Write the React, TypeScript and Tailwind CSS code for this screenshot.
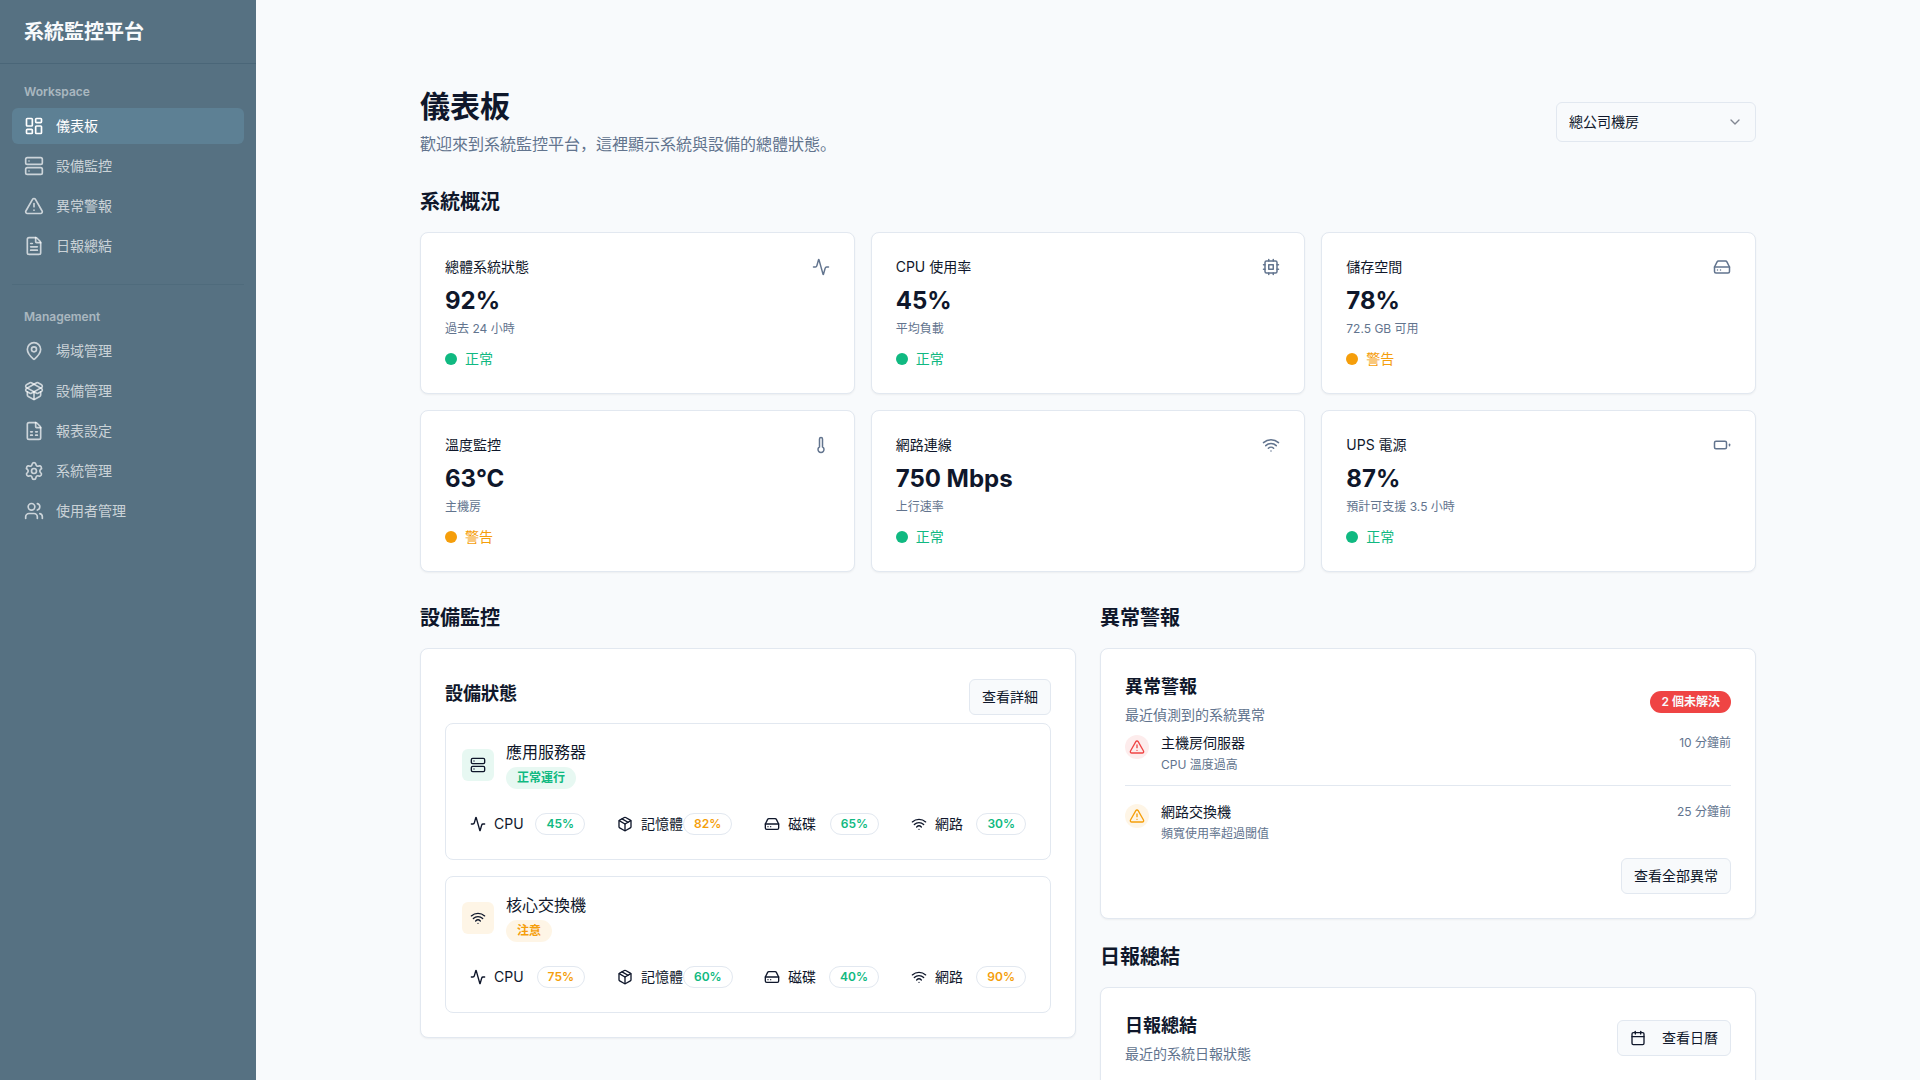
import React from 'react';
import {
  Activity,
  Calendar,
  ChevronDown,
  FileSpreadsheet,
  FileText,
  HardDrive,
  LayoutDashboard,
  MapPin,
  Package,
  PackageOpen,
  Server,
  Settings,
  Thermometer,
  TriangleAlert,
  Users,
  Wifi,
} from 'lucide-react';
import { clsx } from 'clsx';

type Icon = React.ComponentType<{ className?: string }>;
type Status = 'normal' | 'warning';

const STATUS_LABEL: Record<Status, string> = { normal: '正常', warning: '警告' };
const STATUS_TEXT: Record<Status, string> = { normal: 'text-[#10b981]', warning: 'text-[#f59e0b]' };
const STATUS_DOT: Record<Status, string> = { normal: 'bg-[#10b981]', warning: 'bg-[#f59e0b]' };
const STATUS_SOFT: Record<Status, string> = { normal: 'bg-[#10b981]/10', warning: 'bg-[#f59e0b]/10' };

function Cpu({ className }: { className?: string }) {
  return (
    <svg viewBox="0 0 24 24" fill="none" stroke="currentColor" strokeWidth="2" strokeLinecap="round" strokeLinejoin="round" className={className} aria-hidden="true">
      <rect x="4" y="4" width="16" height="16" rx="2" />
      <rect x="9" y="9" width="6" height="6" />
      <path d="M15 2v2M15 20v2M2 15h2M2 9h2M20 15h2M20 9h2M9 2v2M9 20v2" />
    </svg>
  );
}

function Battery({ className }: { className?: string }) {
  return (
    <svg viewBox="0 0 24 24" fill="none" stroke="currentColor" strokeWidth="2" strokeLinecap="round" strokeLinejoin="round" className={className} aria-hidden="true">
      <rect x="2" y="7" width="16" height="10" rx="2" />
      <path d="M22 11v2" />
    </svg>
  );
}

const workspaceLinks: { label: string; icon: Icon; active?: boolean }[] = [
  { label: '儀表板', icon: LayoutDashboard, active: true },
  { label: '設備監控', icon: Server },
  { label: '異常警報', icon: TriangleAlert },
  { label: '日報總結', icon: FileText },
];

const managementLinks: { label: string; icon: Icon; active?: boolean }[] = [
  { label: '場域管理', icon: MapPin },
  { label: '設備管理', icon: PackageOpen },
  { label: '報表設定', icon: FileSpreadsheet },
  { label: '系統管理', icon: Settings },
  { label: '使用者管理', icon: Users },
];

const stats: { title: string; value: string; hint: string; status: Status; icon: Icon }[] = [
  { title: '總體系統狀態', value: '92%', hint: '過去 24 小時', status: 'normal', icon: Activity },
  { title: 'CPU 使用率', value: '45%', hint: '平均負載', status: 'normal', icon: Cpu },
  { title: '儲存空間', value: '78%', hint: '72.5 GB 可用', status: 'warning', icon: HardDrive },
  { title: '溫度監控', value: '63°C', hint: '主機房', status: 'warning', icon: Thermometer },
  { title: '網路連線', value: '750 Mbps', hint: '上行速率', status: 'normal', icon: Wifi },
  { title: 'UPS 電源', value: '87%', hint: '預計可支援 3.5 小時', status: 'normal', icon: Battery },
];

const devices: {
  name: string;
  badge: string;
  status: Status;
  icon: Icon;
  usage: { label: string; value: number; status: Status; icon: Icon }[];
}[] = [
  {
    name: '應用服務器',
    badge: '正常運行',
    status: 'normal',
    icon: Server,
    usage: [
      { label: 'CPU', value: 45, status: 'normal', icon: Activity },
      { label: '記憶體', value: 82, status: 'warning', icon: Package },
      { label: '磁碟', value: 65, status: 'normal', icon: HardDrive },
      { label: '網路', value: 30, status: 'normal', icon: Wifi },
    ],
  },
  {
    name: '核心交換機',
    badge: '注意',
    status: 'warning',
    icon: Wifi,
    usage: [
      { label: 'CPU', value: 75, status: 'warning', icon: Activity },
      { label: '記憶體', value: 60, status: 'normal', icon: Package },
      { label: '磁碟', value: 40, status: 'normal', icon: HardDrive },
      { label: '網路', value: 90, status: 'warning', icon: Wifi },
    ],
  },
];

const alerts = [
  { title: '主機房伺服器', detail: 'CPU 溫度過高', time: '10 分鐘前', tone: 'bg-[#ef4444]/10 text-[#ef4444]' },
  { title: '網路交換機', detail: '頻寬使用率超過閾值', time: '25 分鐘前', tone: 'bg-[#f59e0b]/10 text-[#f59e0b]' },
];

function NavGroup({ title, links }: { title: string; links: typeof workspaceLinks }) {
  return (
    <div>
      <h2 className="px-3 py-2 text-xs font-semibold text-white/50">{title}</h2>
      <ul className="flex flex-col gap-1">
        {links.map(({ label, icon: LinkIcon, active }) => (
          <li key={label}>
            <a
              href="#"
              className={clsx(
                'flex h-9 items-center gap-3 rounded-md px-3 text-sm',
                active ? 'bg-[#5d8094] text-white' : 'text-white/70 hover:bg-[#5d8094] hover:text-white'
              )}
            >
              <LinkIcon className="size-5 shrink-0" />
              {label}
            </a>
          </li>
        ))}
      </ul>
    </div>
  );
}

function Sidebar() {
  return (
    <aside className="sticky top-0 h-screen w-64 shrink-0 bg-[#567182] text-white">
      <div className="flex h-16 items-center border-b border-[#4a6678] px-6">
        <span className="text-xl font-bold text-slate-50">系統監控平台</span>
      </div>
      <nav className="p-3">
        <NavGroup title="Workspace" links={workspaceLinks} />
        <hr className="mt-5 mb-4 border-[#4f6b7c]" />
        <NavGroup title="Management" links={managementLinks} />
      </nav>
    </aside>
  );
}

function Card({ className, children }: { className?: string; children: React.ReactNode }) {
  return (
    <div className={clsx('rounded-lg border border-slate-200 bg-white p-6 shadow-xs', className)}>
      {children}
    </div>
  );
}

function SectionTitle({ children }: { children: React.ReactNode }) {
  return <h2 className="mb-4 text-xl font-bold">{children}</h2>;
}

function OutlineButton({ className, children }: { className?: string; children: React.ReactNode }) {
  return (
    <button
      type="button"
      className={clsx(
        'inline-flex h-9 items-center justify-center rounded-md border border-slate-200 bg-slate-50 px-3 text-sm hover:bg-slate-100',
        className
      )}
    >
      {children}
    </button>
  );
}

function StatCard({ title, value, hint, status, icon: StatIcon }: (typeof stats)[number]) {
  return (
    <Card>
      <div className="flex items-center justify-between pb-2">
        <h3 className="text-sm">{title}</h3>
        <StatIcon className="size-[18px] text-slate-500" />
      </div>
      <p className="text-2xl font-bold">{value}</p>
      <p className="mt-1 text-xs text-slate-500">{hint}</p>
      <div className="mt-3 flex items-center gap-2">
        <span className={clsx('size-3 rounded-full', STATUS_DOT[status])} />
        <span className={clsx('text-sm', STATUS_TEXT[status])}>{STATUS_LABEL[status]}</span>
      </div>
    </Card>
  );
}

function DeviceCard({ name, badge, status, icon: DeviceIcon, usage }: (typeof devices)[number]) {
  return (
    <div className="rounded-lg border border-slate-200 p-4">
      <div className="mb-4 flex items-center gap-3">
        <div className={clsx('rounded-md p-2', STATUS_SOFT[status])}>
          <DeviceIcon className="size-4" />
        </div>
        <div className="flex flex-col items-start gap-[3px]">
          <h4 className="text-base">{name}</h4>
          <span
            className={clsx(
              'rounded-full border border-transparent px-2.5 py-0.5 text-xs font-bold',
              STATUS_SOFT[status],
              STATUS_TEXT[status]
            )}
          >
            {badge}
          </span>
        </div>
      </div>
      <div className="grid grid-cols-4 gap-4">
        {usage.map(({ label, value, status: level, icon: UsageIcon }) => (
          <div key={label} className="flex items-center justify-between p-2">
            <div className="flex items-center gap-2">
              <UsageIcon className="size-4 shrink-0" />
              <span className="text-sm whitespace-nowrap">{label}</span>
            </div>
            <span
              className={clsx(
                'rounded-full border border-slate-200 px-2.5 py-0.5 text-xs font-semibold',
                STATUS_TEXT[level]
              )}
            >
              {value}%
            </span>
          </div>
        ))}
      </div>
    </div>
  );
}

function DeviceSection() {
  return (
    <section>
      <SectionTitle>設備監控</SectionTitle>
      <Card>
        <div className="flex items-center justify-between pb-2">
          <h3 className="text-lg font-bold">設備狀態</h3>
          <OutlineButton className="mt-1.5">查看詳細</OutlineButton>
        </div>
        <div className="flex flex-col gap-4">
          {devices.map((device) => (
            <DeviceCard key={device.name} {...device} />
          ))}
        </div>
      </Card>
    </section>
  );
}

function AlertSection() {
  return (
    <section>
      <SectionTitle>異常警報</SectionTitle>
      <Card>
        <div className="flex items-center justify-between pb-2">
          <div>
            <h3 className="text-lg font-bold">異常警報</h3>
            <p className="mt-1 text-sm text-slate-500">最近偵測到的系統異常</p>
          </div>
          <span className="mt-1.5 rounded-full border border-transparent bg-[#ef4444] px-2.5 py-0.5 text-xs font-semibold text-slate-50">
            2 個未解決
          </span>
        </div>
        <ul className="flex flex-col gap-4">
          {alerts.map(({ title, detail, time, tone }) => (
            <li
              key={title}
              className="flex items-start gap-3 border-b border-slate-200 pb-3 last:border-b-0 last:pb-0"
            >
              <span className={clsx('mt-0.5 rounded-full p-1', tone)}>
                <TriangleAlert className="size-4" />
              </span>
              <div className="flex-1">
                <div className="flex items-center justify-between">
                  <p className="text-sm">{title}</p>
                  <span className="text-xs text-slate-500">{time}</span>
                </div>
                <p className="mt-1 text-xs text-slate-500">{detail}</p>
              </div>
            </li>
          ))}
        </ul>
        <div className="mt-4 flex justify-end">
          <OutlineButton>查看全部異常</OutlineButton>
        </div>
      </Card>
    </section>
  );
}

function ReportSection() {
  return (
    <section>
      <SectionTitle>日報總結</SectionTitle>
      <Card>
        <div className="flex items-center justify-between pb-2">
          <div>
            <h3 className="text-lg font-bold">日報總結</h3>
            <p className="mt-1 text-sm text-slate-500">最近的系統日報狀態</p>
          </div>
          <OutlineButton className="gap-4">
            <Calendar className="size-4" />
            查看日曆
          </OutlineButton>
        </div>
      </Card>
    </section>
  );
}

export default function App() {
  return (
    <div className="flex min-h-screen bg-slate-50 font-['Inter','Noto_Sans_CJK_JP',sans-serif] text-slate-900">
      <Sidebar />
      <main className="min-w-0 flex-1">
        <div className="mx-auto max-w-[1400px] px-8 pt-[88px] pb-8">
          <header className="mb-8 flex items-center justify-between">
            <div>
              <h1 className="text-3xl font-bold">儀表板</h1>
              <p className="mt-2 text-base text-slate-500">
                歡迎來到系統監控平台，這裡顯示系統與設備的總體狀態。
              </p>
            </div>
            <div className="relative w-[200px]">
              <select
                aria-label="機房"
                className="h-10 w-full appearance-none rounded-md border border-slate-200 bg-slate-50 px-3 text-sm"
              >
                <option>總公司機房</option>
              </select>
              <ChevronDown className="pointer-events-none absolute top-3 right-[13px] size-4 opacity-50" />
            </div>
          </header>

          <section className="mb-8">
            <SectionTitle>系統概況</SectionTitle>
            <div className="grid grid-cols-1 gap-4 md:grid-cols-2 lg:grid-cols-3">
              {stats.map((stat) => (
                <StatCard key={stat.title} {...stat} />
              ))}
            </div>
          </section>

          <div className="grid grid-cols-1 items-start gap-6 lg:grid-cols-2">
            <DeviceSection />
            <div className="flex flex-col gap-6">
              <AlertSection />
              <ReportSection />
            </div>
          </div>
        </div>
      </main>
    </div>
  );
}
